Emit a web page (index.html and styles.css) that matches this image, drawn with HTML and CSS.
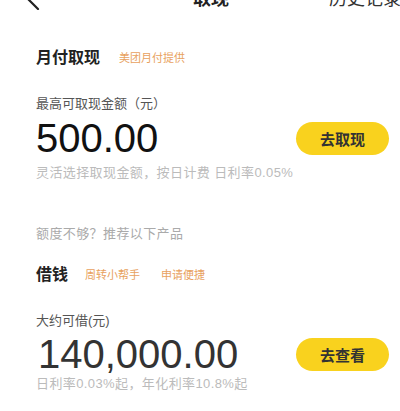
FILE: index.html
```html
<!DOCTYPE html>
<html lang="zh-CN">
<head>
    <meta charset="UTF-8">
    <meta name="viewport" content="width=device-width, initial-scale=1.0">
    <title>取现</title>
    <link rel="stylesheet" href="styles.css">
</head>
<body>
    <div class="header">
        <span class="back">
            <svg width="14" height="22" viewBox="0 0 14 22"><polyline points="12,1 2,11 12,21" fill="none" stroke="#222" stroke-width="2.2" stroke-linecap="round" stroke-linejoin="round"/></svg>
        </span>
        <span class="title">取现</span>
        <span class="history">历史记录</span>
    </div>

    <div class="page">
        <div class="card-title">
            <span class="name">月付取现</span>
            <span class="tag">美团月付提供</span>
        </div>
        <div class="label">最高可取现金额（元）</div>
        <div class="amount-row">
            <span class="amount">500.00</span>
            <button class="btn">去取现</button>
        </div>
        <div class="hint">灵活选择取现金额，按日计费 日利率0.05%</div>

        <div class="more">额度不够？推荐以下产品</div>

        <div class="card-title loan-title">
            <span class="name">借钱</span>
            <span class="tag">周转小帮手</span>
            <span class="tag">申请便捷</span>
        </div>
        <div class="label loan-label">大约可借(元)</div>
        <div class="amount-row loan-row">
            <span class="amount loan-amount">140,000.00</span>
            <button class="btn">去查看</button>
        </div>
        <div class="hint loan-hint">日利率0.03%起，年化利率10.8%起</div>
    </div>
</body>
</html>
```

FILE: styles.css
```css
body { margin: 0; background: #fff; font-family: "Liberation Sans", "Noto Sans CJK SC", sans-serif; color: #222; overflow: hidden; }

.header { display: flex; align-items: center; height: 24px; margin-top: -13px; padding: 0 0 0 26px; font-size: 18px; line-height: 24px; }
.back { display: flex; width: 14px; }
.back svg { display: block; }
.title { margin-left: 153px; font-weight: bold; color: #222; }
.history { margin-left: auto; margin-right: -1px; color: #333; }

.page { padding: 0 11px 0 36px; }

.card-title { display: flex; align-items: center; margin-top: 36px; line-height: 22px; }
.name { font-size: 16px; font-weight: bold; color: #222; }
.tag { font-size: 11px; color: #e8a15e; margin-left: 19px; }
.loan-title .tag + .tag { margin-left: 21px; }
.loan-title .name + .tag { margin-left: 17px; }

.label { margin-top: 26px; font-size: 13px; line-height: 18px; color: #555; }

.amount-row { display: flex; align-items: center; justify-content: space-between; margin-top: 5px; height: 40px; }
.amount { font-size: 40px; line-height: 40px; color: #111; }
.btn { width: 93px; height: 33px; border: none; border-radius: 17px; background: #f9d21e; color: #333; font-family: inherit; font-size: 15px; font-weight: bold; padding: 0; }

.hint { margin-top: 6px; font-size: 13px; line-height: 18px; color: #bbb; letter-spacing: 0.4px; }

.more { margin-top: 43px; font-size: 13px; line-height: 18px; color: #aaa; letter-spacing: 0.4px; }

.loan-title { margin-top: 21px; }
.loan-label { margin-top: 26px; }
.loan-row { margin-top: 4px; }
.loan-amount { color: #333; margin-left: 2px; }
.loan-hint { margin-top: 1px; }
```
